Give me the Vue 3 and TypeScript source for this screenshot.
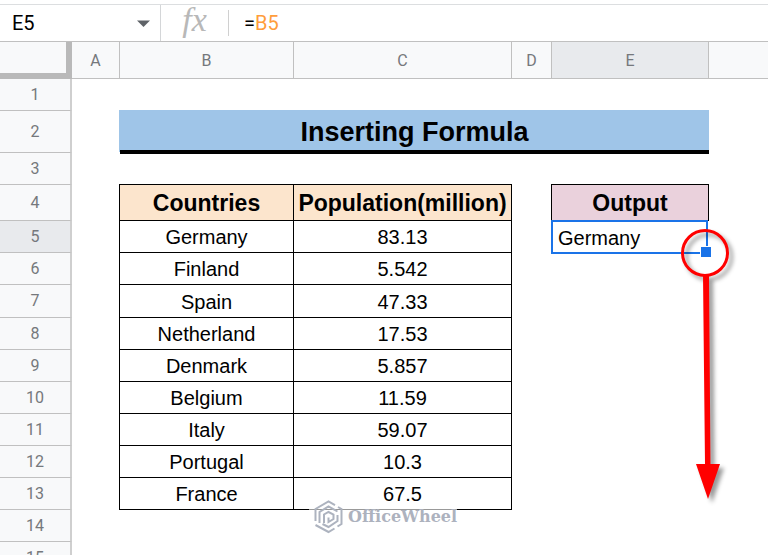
<script setup lang="ts">
import { ref } from 'vue'

interface Column {
  name: string
  size: string
}

interface Entry {
  country: string
  population: string
}

const columns: Column[] = [
  { name: 'A', size: 'col-a' },
  { name: 'B', size: 'col-b' },
  { name: 'C', size: 'col-c' },
  { name: 'D', size: 'col-d' },
  { name: 'E', size: 'col-e' },
  { name: '', size: 'col-rest' },
]

const entries: Entry[] = [
  { country: 'Germany', population: '83.13' },
  { country: 'Finland', population: '5.542' },
  { country: 'Spain', population: '47.33' },
  { country: 'Netherland', population: '17.53' },
  { country: 'Denmark', population: '5.857' },
  { country: 'Belgium', population: '11.59' },
  { country: 'Italy', population: '59.07' },
  { country: 'Portugal', population: '10.3' },
  { country: 'France', population: '67.5' },
]

const cellName = ref('E5')
const reference = ref('B5')
</script>

<template>
  <main class="app">
    <header class="formula-bar">
      <div class="name-box">
        <input v-model="cellName" class="name-input" type="text" aria-label="Name box" />
        <button class="name-menu" type="button" aria-label="Named ranges">
          <svg width="13" height="7" viewBox="0 0 13 7" aria-hidden="true">
            <path d="M0 0.5H13L6.5 7Z" fill="#5f6368" />
          </svg>
        </button>
      </div>
      <span class="fx">fx</span>
      <div class="formula">
        <label for="formula">=</label>
        <input id="formula" v-model="reference" class="formula-input" type="text" />
      </div>
    </header>

    <table class="sheet">
      <colgroup>
        <col class="col-head" />
        <col v-for="col in columns" :key="col.size" :class="col.size" />
      </colgroup>
      <thead>
        <tr class="row-letters">
          <td class="corner"></td>
          <th
            v-for="col in columns"
            :key="col.size"
            scope="col"
            class="head letter"
            :class="{ active: col.name === 'E' }"
          >{{ col.name }}</th>
        </tr>
      </thead>
      <tbody>
        <tr>
          <th scope="row" class="head number">1</th>
          <td colspan="6"></td>
        </tr>
        <tr class="row-title">
          <th scope="row" class="head number">2</th>
          <td></td>
          <td class="title" colspan="4">Inserting Formula</td>
          <td></td>
        </tr>
        <tr>
          <th scope="row" class="head number">3</th>
          <td colspan="6"></td>
        </tr>
        <tr class="row-labels">
          <th scope="row" class="head number">4</th>
          <td></td>
          <td class="boxed label peach">Countries</td>
          <td class="boxed label peach">Population(million)</td>
          <td></td>
          <td class="boxed label pink">Output</td>
          <td></td>
        </tr>
        <tr v-for="(entry, i) in entries" :key="entry.country" :class="{ tall: i === 2 }">
          <th scope="row" class="head number" :class="{ active: i === 0 }">{{ i + 5 }}</th>
          <td></td>
          <td class="boxed">{{ entry.country }}</td>
          <td class="boxed population">
            {{ entry.population }}
            <div v-if="i === entries.length - 1" class="watermark">
              <svg width="30" height="34" viewBox="0 0 30 34" aria-hidden="true">
                <g fill="none" stroke="#adb3bf" stroke-width="2">
                  <path d="M1.500 21V9L14.500 1.500L21 5.200" />
                  <path d="M5.500 23V12L14.500 6.500L23.500 11.500" />
                  <path d="M24 7L27.500 9V24L23.500 26.500" />
                  <path d="M1.500 25L14.500 32L20.500 28.500" />
                  <path d="M23.500 15V21L14.500 27L8.500 24" />
                  <path d="M10 23V14.500L14.500 12L19.500 14.500V19L14.500 22V17.500" />
                </g>
              </svg>
              <span>OfficeWheel</span>
            </div>
          </td>
          <td></td>
          <td v-if="i === 0" class="output">
            Germany
            <span class="selection"></span>
            <span class="handle"></span>
            <svg class="callout" width="64" height="290" viewBox="0 0 64 290" aria-hidden="true">
              <g class="marks">
                <circle cx="31" cy="32" r="22.500" fill="none" stroke="#f00" stroke-width="3" />
                <path d="M29 54H35L36.500 243H46L34 278L22 243H31Z" fill="#f00" />
              </g>
            </svg>
          </td>
          <td v-else></td>
          <td></td>
        </tr>
        <tr v-for="n in [14, 15]" :key="n">
          <th scope="row" class="head number">{{ n }}</th>
          <td colspan="6"></td>
        </tr>
      </tbody>
    </table>
  </main>
</template>

<style>
body {
  margin: 0;
  background: #fff;
}
</style>

<style scoped>
.app {
  height: 100vh;
  overflow: hidden;
  padding-top: 4px;
  box-sizing: border-box;
  background: #fff;
  color: #000;
  font-family: "Liberation Sans", Arial, sans-serif;
}

.formula-bar {
  display: flex;
  align-items: center;
  height: 38px;
  box-sizing: border-box;
  border-top: 1px solid #dcdee0;
  border-bottom: 1px solid #c0c0c0;
  font-family: Roboto, sans-serif;
  font-size: 20px;
}

.name-box {
  display: flex;
  align-items: center;
  align-self: stretch;
  width: 161px;
  box-sizing: border-box;
  padding: 0 10px 0 12px;
  border-right: 1px solid #d4d6d8;
}

input,
button {
  margin: 0;
  padding: 0;
  border: 0;
  background: none;
  font: inherit;
  outline: none;
}

.name-input {
  flex: 1;
  min-width: 0;
  color: #000;
}

.name-menu {
  display: flex;
}

.fx {
  width: 67px;
  padding-bottom: 6px;
  border-right: 1px solid #d0d0d0;
  color: #b8b8b8;
  font-family: "Liberation Serif", serif;
  font-size: 34px;
  font-style: italic;
  line-height: 20px;
  text-align: center;
}

.formula {
  display: flex;
  flex: 1;
  align-items: center;
  padding-left: 15px;
}

.formula-input {
  flex: 1;
  min-width: 0;
  color: #ff9d3c;
}

.sheet {
  width: 100%;
  table-layout: fixed;
  border-collapse: separate;
  border-spacing: 0;
}

.col-head { width: 72px; }
.col-a { width: 48px; }
.col-b { width: 174px; }
.col-c { width: 218px; }
.col-d { width: 40px; }
.col-e { width: 157px; }

.sheet tr {
  height: 32px;
}

.sheet .row-letters {
  height: 37px;
}

.sheet .row-title {
  height: 42px;
}

.sheet .row-labels {
  height: 36px;
}

.sheet .tall {
  height: 33px;
}

th,
td {
  box-sizing: border-box;
  padding: 0;
}

.head {
  border-right: 1px solid #c0c0c0;
  border-bottom: 1px solid #c0c0c0;
  background: #f8f9fa;
  color: #75787c;
  font-family: Roboto, sans-serif;
  font-size: 16px;
  font-weight: 400;
  line-height: 20px;
  text-align: center;
}

.number {
  border-right: 2px solid #cfcfcf;
}

.head.active {
  background: #e8eaed;
}

.letter {
  padding-top: 1px;
}

.letter:last-child {
  border-right: 0;
}

.corner {
  border-right: 6px solid #b9b9b9;
  border-bottom: 6px solid #b9b9b9;
  background: #f8f9fa;
}

.title {
  border-bottom: 1px solid #000;
  background: #9fc5e8;
  box-shadow: inset 0 -2px #000, 0 1px #000, -1px -1px #9fc5e8, 0 -1px #9fc5e8;
  font-size: 27px;
  font-weight: 700;
  line-height: 30px;
  text-align: center;
}

.boxed {
  padding-top: 1px;
  border-right: 1px solid #000;
  border-bottom: 1px solid #000;
  box-shadow: -1px 0 #000, 0 -1px #000, -1px -1px #000;
  font-size: 20px;
  line-height: 24px;
  text-align: center;
}

.label {
  font-size: 23px;
  font-weight: 700;
}

.peach { background: #fce5cd; }
.pink { background: #ead1dc; }

.population {
  position: relative;
}

.output {
  position: relative;
  padding-top: 1px;
  padding-left: 6px;
  font-size: 20px;
  line-height: 24px;
}

.selection {
  position: absolute;
  inset: -1px 1px -1px -1px;
  border: 2px solid #1a73e8;
}

.handle {
  position: absolute;
  right: -3px;
  bottom: -5px;
  width: 10px;
  height: 10px;
  border: 1px solid #fff;
  background: #1a73e8;
}

.callout {
  position: absolute;
  top: 0;
  right: -29px;
  overflow: visible;
  pointer-events: none;
}

.marks {
  filter: drop-shadow(4px 4px 2px rgba(0, 0, 0, 0.4));
}

.watermark {
  position: absolute;
  top: 22px;
  left: 15px;
  display: flex;
  align-items: center;
  gap: 4px;
  padding-left: 5px;
  background: linear-gradient(rgba(255, 255, 255, 0) 4px, rgba(255, 255, 255, 0.6) 4px);
  color: #adb2be;
  font-family: "DejaVu Serif", serif;
  font-size: 16px;
  font-weight: 700;
  line-height: 18px;
}
</style>
